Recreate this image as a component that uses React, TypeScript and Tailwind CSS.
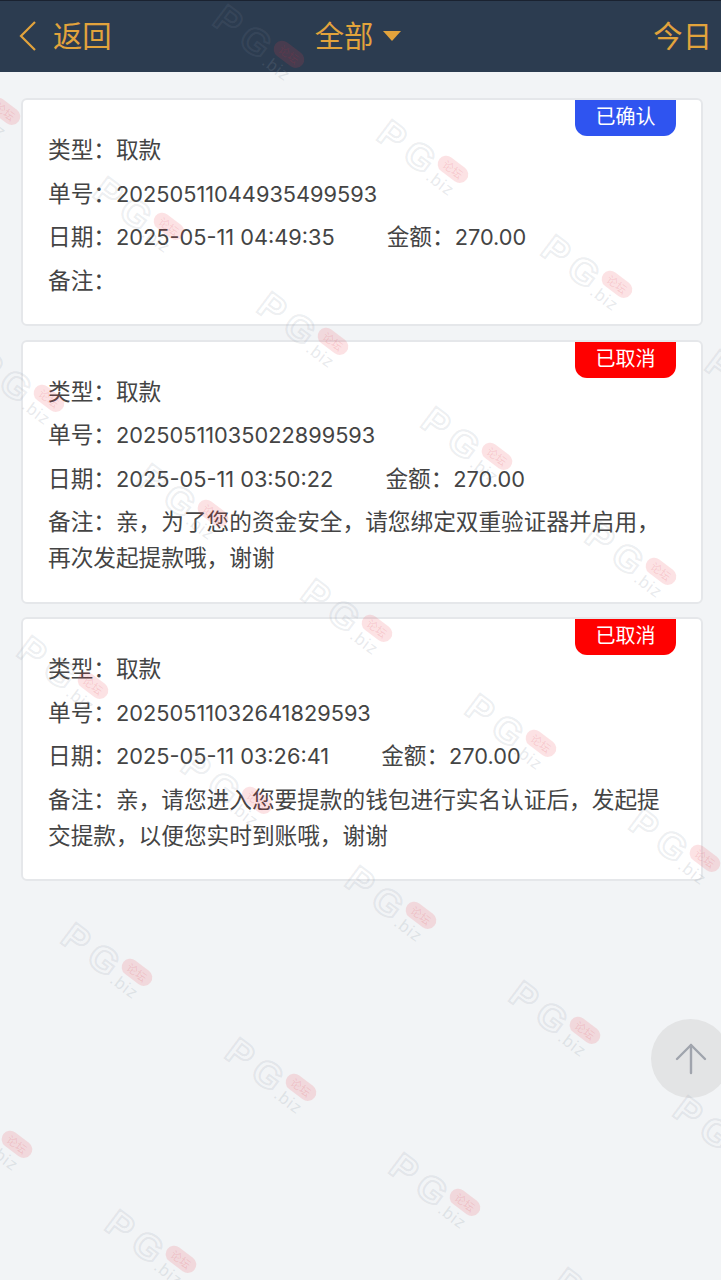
import { ArrowUp } from 'lucide-react';

type Order = {
  id: string;
  date: string;
  amount: string;
  status: string;
  badge: string;
  note: string;
};

const orders: Order[] = [
  {
    id: '20250511044935499593',
    date: '2025-05-11 04:49:35',
    amount: '270.00',
    status: '已确认',
    badge: 'bg-[#2f54f0]',
    note: '',
  },
  {
    id: '20250511035022899593',
    date: '2025-05-11 03:50:22',
    amount: '270.00',
    status: '已取消',
    badge: 'bg-[#ff0000]',
    note: '亲，为了您的资金安全，请您绑定双重验证器并启用，再次发起提款哦，谢谢',
  },
  {
    id: '20250511032641829593',
    date: '2025-05-11 03:26:41',
    amount: '270.00',
    status: '已取消',
    badge: 'bg-[#ff0000]',
    note: '亲，请您进入您要提款的钱包进行实名认证后，发起提交提款，以便您实时到账哦，谢谢',
  },
];

// watermark repeats on a skewed lattice across the whole page
const marks: { x: number; y: number }[] = [];
for (let i = -3; i <= 4; i++) {
  for (let j = -4; j <= 1; j++) {
    const x = 240 + i * 164 + j * 44;
    const y = 1037 + i * 115 + j * 287;
    if (x > -110 && x < 721 && y > -30 && y < 1280) marks.push({ x, y });
  }
}

const Watermark = ({ x, y }: { x: number; y: number }) => (
  <div
    className="absolute w-0 h-0 origin-top-left rotate-[37deg] pointer-events-none"
    style={{ left: x, top: y }}
  >
    <span className='absolute left-[-2px] top-[-5px] text-[37px] leading-[37px] font-bold tracking-[8px] text-transparent [-webkit-text-stroke:2px_rgba(125,135,155,0.15)] font-["Liberation_Sans",sans-serif]'>
      PG
    </span>
    <span className='absolute left-[62px] top-[14px] text-[17px] leading-[17px] tracking-[1px] text-[#8a94a3]/20 font-["Liberation_Sans",sans-serif]'>
      .biz
    </span>
    <span className='absolute left-[62px] top-[-5px] w-[34px] h-[17px] rounded-full bg-[#ee3b4b]/15 text-[11px] leading-[17px] text-center text-[#d92b3b]/15 font-["Noto_Sans_CJK_SC",sans-serif]'>
      论坛
    </span>
  </div>
);

const Row = ({ children }: { children: React.ReactNode }) => (
  <div className="text-[22.67px] leading-[36px] text-[#444444] mb-[7.5px] last:mb-0">{children}</div>
);

const Num = ({ children }: { children: React.ReactNode }) => (
  <span className="text-[21.75px]">{children}</span>
);

const OrderCard = ({ order }: { order: Order }) => (
  <div className="relative bg-white border-2 border-[#e5e7ea] rounded-[6px] px-[25px] pt-[32px] pb-[25.5px]">
    <div
      className={`absolute top-0 right-[25px] w-[101px] h-[36px] rounded-b-[12px] text-white text-[20px] leading-[34px] text-center ${order.badge}`}
    >
      {order.status}
    </div>
    <Row>类型：取款</Row>
    <Row>
      单号：<Num>{order.id}</Num>
    </Row>
    <Row>
      日期：<Num>{order.date}</Num>
      <span className="ml-[52px]">金额：</span>
      <Num>{order.amount}</Num>
    </Row>
    <Row>备注：{order.note}</Row>
  </div>
);

const App = () => {
  return (
    <div className='relative w-[721px] h-[1280px] overflow-hidden bg-[#f2f4f6] font-["Inter","Noto_Sans_CJK_SC",sans-serif]'>
      <header className="flex items-center justify-between h-[72px] bg-[#2c3c50] border-t border-[#1a2230] pl-[18px] pr-[9px] text-[#e2a33c] text-[29.33px]">
        <div className="flex items-center gap-[15px] w-[186px]">
          <svg width="20" height="32" viewBox="0 0 20 32" fill="none" stroke="currentColor" strokeWidth="2.2">
            <path d="M17 2 L3 16 L17 30" />
          </svg>
          <span>返回</span>
        </div>
        <div className="flex items-center gap-[10px]">
          <span>全部</span>
          <svg width="18" height="10" viewBox="0 0 18 10" fill="currentColor">
            <path d="M0 0 H18 L9 10 Z" />
          </svg>
        </div>
        <div className="w-[200px] text-right">今日</div>
      </header>

      <main className="flex flex-col gap-[13.5px] pl-[21px] pr-[18px] pt-[26px]">
        {orders.map((o) => (
          <OrderCard key={o.id} order={o} />
        ))}
      </main>

      <button className="absolute left-[651px] top-[1019px] w-[79px] h-[79px] rounded-full bg-[#e3e4e5] flex items-center justify-center">
        <ArrowUp className="w-[48px] h-[48px] text-[#a0a4ad]" strokeWidth={1.2} />
      </button>

      {marks.map((m) => (
        <Watermark key={`${m.x}-${m.y}`} x={m.x} y={m.y} />
      ))}
    </div>
  );
};

export default App;
